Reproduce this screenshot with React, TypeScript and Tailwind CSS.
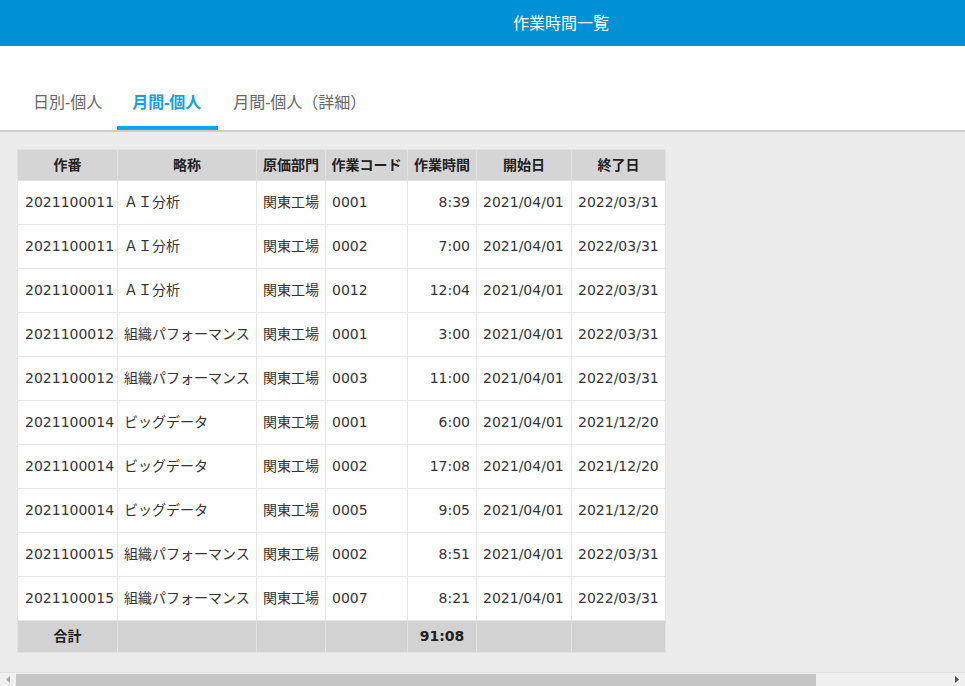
import React from "react";

interface Row {
  sakuban: string;
  ryakusho: string;
  bumon: string;
  code: string;
  jikan: string;
  start: string;
  end: string;
}

const rows: Row[] = [
  { sakuban: "2021100011", ryakusho: "ＡＩ分析", bumon: "関東工場", code: "0001", jikan: "8:39", start: "2021/04/01", end: "2022/03/31" },
  { sakuban: "2021100011", ryakusho: "ＡＩ分析", bumon: "関東工場", code: "0002", jikan: "7:00", start: "2021/04/01", end: "2022/03/31" },
  { sakuban: "2021100011", ryakusho: "ＡＩ分析", bumon: "関東工場", code: "0012", jikan: "12:04", start: "2021/04/01", end: "2022/03/31" },
  { sakuban: "2021100012", ryakusho: "組織パフォーマンス", bumon: "関東工場", code: "0001", jikan: "3:00", start: "2021/04/01", end: "2022/03/31" },
  { sakuban: "2021100012", ryakusho: "組織パフォーマンス", bumon: "関東工場", code: "0003", jikan: "11:00", start: "2021/04/01", end: "2022/03/31" },
  { sakuban: "2021100014", ryakusho: "ビッグデータ", bumon: "関東工場", code: "0001", jikan: "6:00", start: "2021/04/01", end: "2021/12/20" },
  { sakuban: "2021100014", ryakusho: "ビッグデータ", bumon: "関東工場", code: "0002", jikan: "17:08", start: "2021/04/01", end: "2021/12/20" },
  { sakuban: "2021100014", ryakusho: "ビッグデータ", bumon: "関東工場", code: "0005", jikan: "9:05", start: "2021/04/01", end: "2021/12/20" },
  { sakuban: "2021100015", ryakusho: "組織パフォーマンス", bumon: "関東工場", code: "0002", jikan: "8:51", start: "2021/04/01", end: "2022/03/31" },
  { sakuban: "2021100015", ryakusho: "組織パフォーマンス", bumon: "関東工場", code: "0007", jikan: "8:21", start: "2021/04/01", end: "2022/03/31" },
];

const tabs = ["日別-個人", "月間-個人", "月間-個人（詳細）"];

export default function App() {
  const th = "h-[31px] border border-[#e2e2e2] bg-[#d5d5d5] text-[14px] font-bold text-[#222] text-center whitespace-nowrap p-0 overflow-hidden";
  const td = "h-[44px] border border-[#e6e6e6] bg-white text-[14px] text-[#333] whitespace-nowrap px-[6px] py-0 overflow-hidden";
  const tf = "h-[32px] border border-[#e2e2e2] bg-[#d2d2d2] text-[14px] font-bold text-[#222] p-0";

  return (
    <div
      className="w-[965px] h-[686px] flex flex-col overflow-hidden bg-[#ececec]"
      style={{ fontFamily: '"DejaVu Sans", "Noto Sans CJK JP", sans-serif' }}
    >
      <header className="h-[46px] shrink-0 bg-[#0090d6] flex items-center pl-[513px] pb-[3px]">
        <span className="text-white text-[16px]" style={{ fontFamily: '"Noto Sans CJK JP", sans-serif' }}>作業時間一覧</span>
      </header>

      <nav
        className="h-[86px] shrink-0 bg-white border-b-2 border-[#cdcdcd] flex items-end pl-[18px]"
        style={{ fontFamily: '"Noto Sans", "Noto Sans CJK JP", sans-serif' }}
      >
        {tabs.map((t, i) => (
          <div
            key={t}
            className={`h-[40px] px-[15px] flex items-start text-[16px] border-b-4 ${
              i === 1 ? "text-[#13a0e6] font-bold border-[#0aa3f5] w-[101px]" : "text-[#666] border-transparent"
            }`}
          >
            {t}
          </div>
        ))}
      </nav>

      <main className="flex-1 pt-[17px] pl-[17px]">
        <table className="border-collapse table-fixed w-[648px]">
          <colgroup>
            <col className="w-[100px]" />
            <col className="w-[139px]" />
            <col className="w-[69px]" />
            <col className="w-[82px]" />
            <col className="w-[69px]" />
            <col className="w-[95px]" />
            <col className="w-[94px]" />
          </colgroup>
          <thead>
            <tr>
              <th className={th}>作番</th>
              <th className={th}>略称</th>
              <th className={th}>原価部門</th>
              <th className={th}>作業コード</th>
              <th className={th}>作業時間</th>
              <th className={th}>開始日</th>
              <th className={th}>終了日</th>
            </tr>
          </thead>
          <tbody>
            {rows.map((r, i) => (
              <tr key={i}>
                <td className={`${td} px-[7px]`}>{r.sakuban}</td>
                <td className={td}>{r.ryakusho}</td>
                <td className={td}>{r.bumon}</td>
                <td className={td}>{r.code}</td>
                <td className={`${td} text-right`}>{r.jikan}</td>
                <td className={`${td} px-[5px]`}>{r.start}</td>
                <td className={`${td} px-[5px]`}>{r.end}</td>
              </tr>
            ))}
          </tbody>
          <tfoot>
            <tr>
              <td className={`${tf} text-center`}>合計</td>
              <td className={tf}></td>
              <td className={tf}></td>
              <td className={tf}></td>
              <td className={`${tf} text-center`}>91:08</td>
              <td className={tf}></td>
              <td className={tf}></td>
            </tr>
          </tfoot>
        </table>
      </main>

      <div className="h-[14px] shrink-0 bg-[#f0f0f0] flex items-center border-t border-[#e0e0e0]">
        <div className="w-[16px] flex justify-center">
          <svg width="4" height="7" viewBox="0 0 4 7"><path d="M4 0L0 3.5L4 7Z" fill="#a8a8a8" /></svg>
        </div>
        <div className="w-[800px] h-[12px] bg-[#c5c5c5]" />
        <div className="flex-1" />
        <div className="w-[16px] flex justify-center">
          <svg width="4" height="7" viewBox="0 0 4 7"><path d="M0 0L4 3.5L0 7Z" fill="#505050" /></svg>
        </div>
      </div>
    </div>
  );
}
